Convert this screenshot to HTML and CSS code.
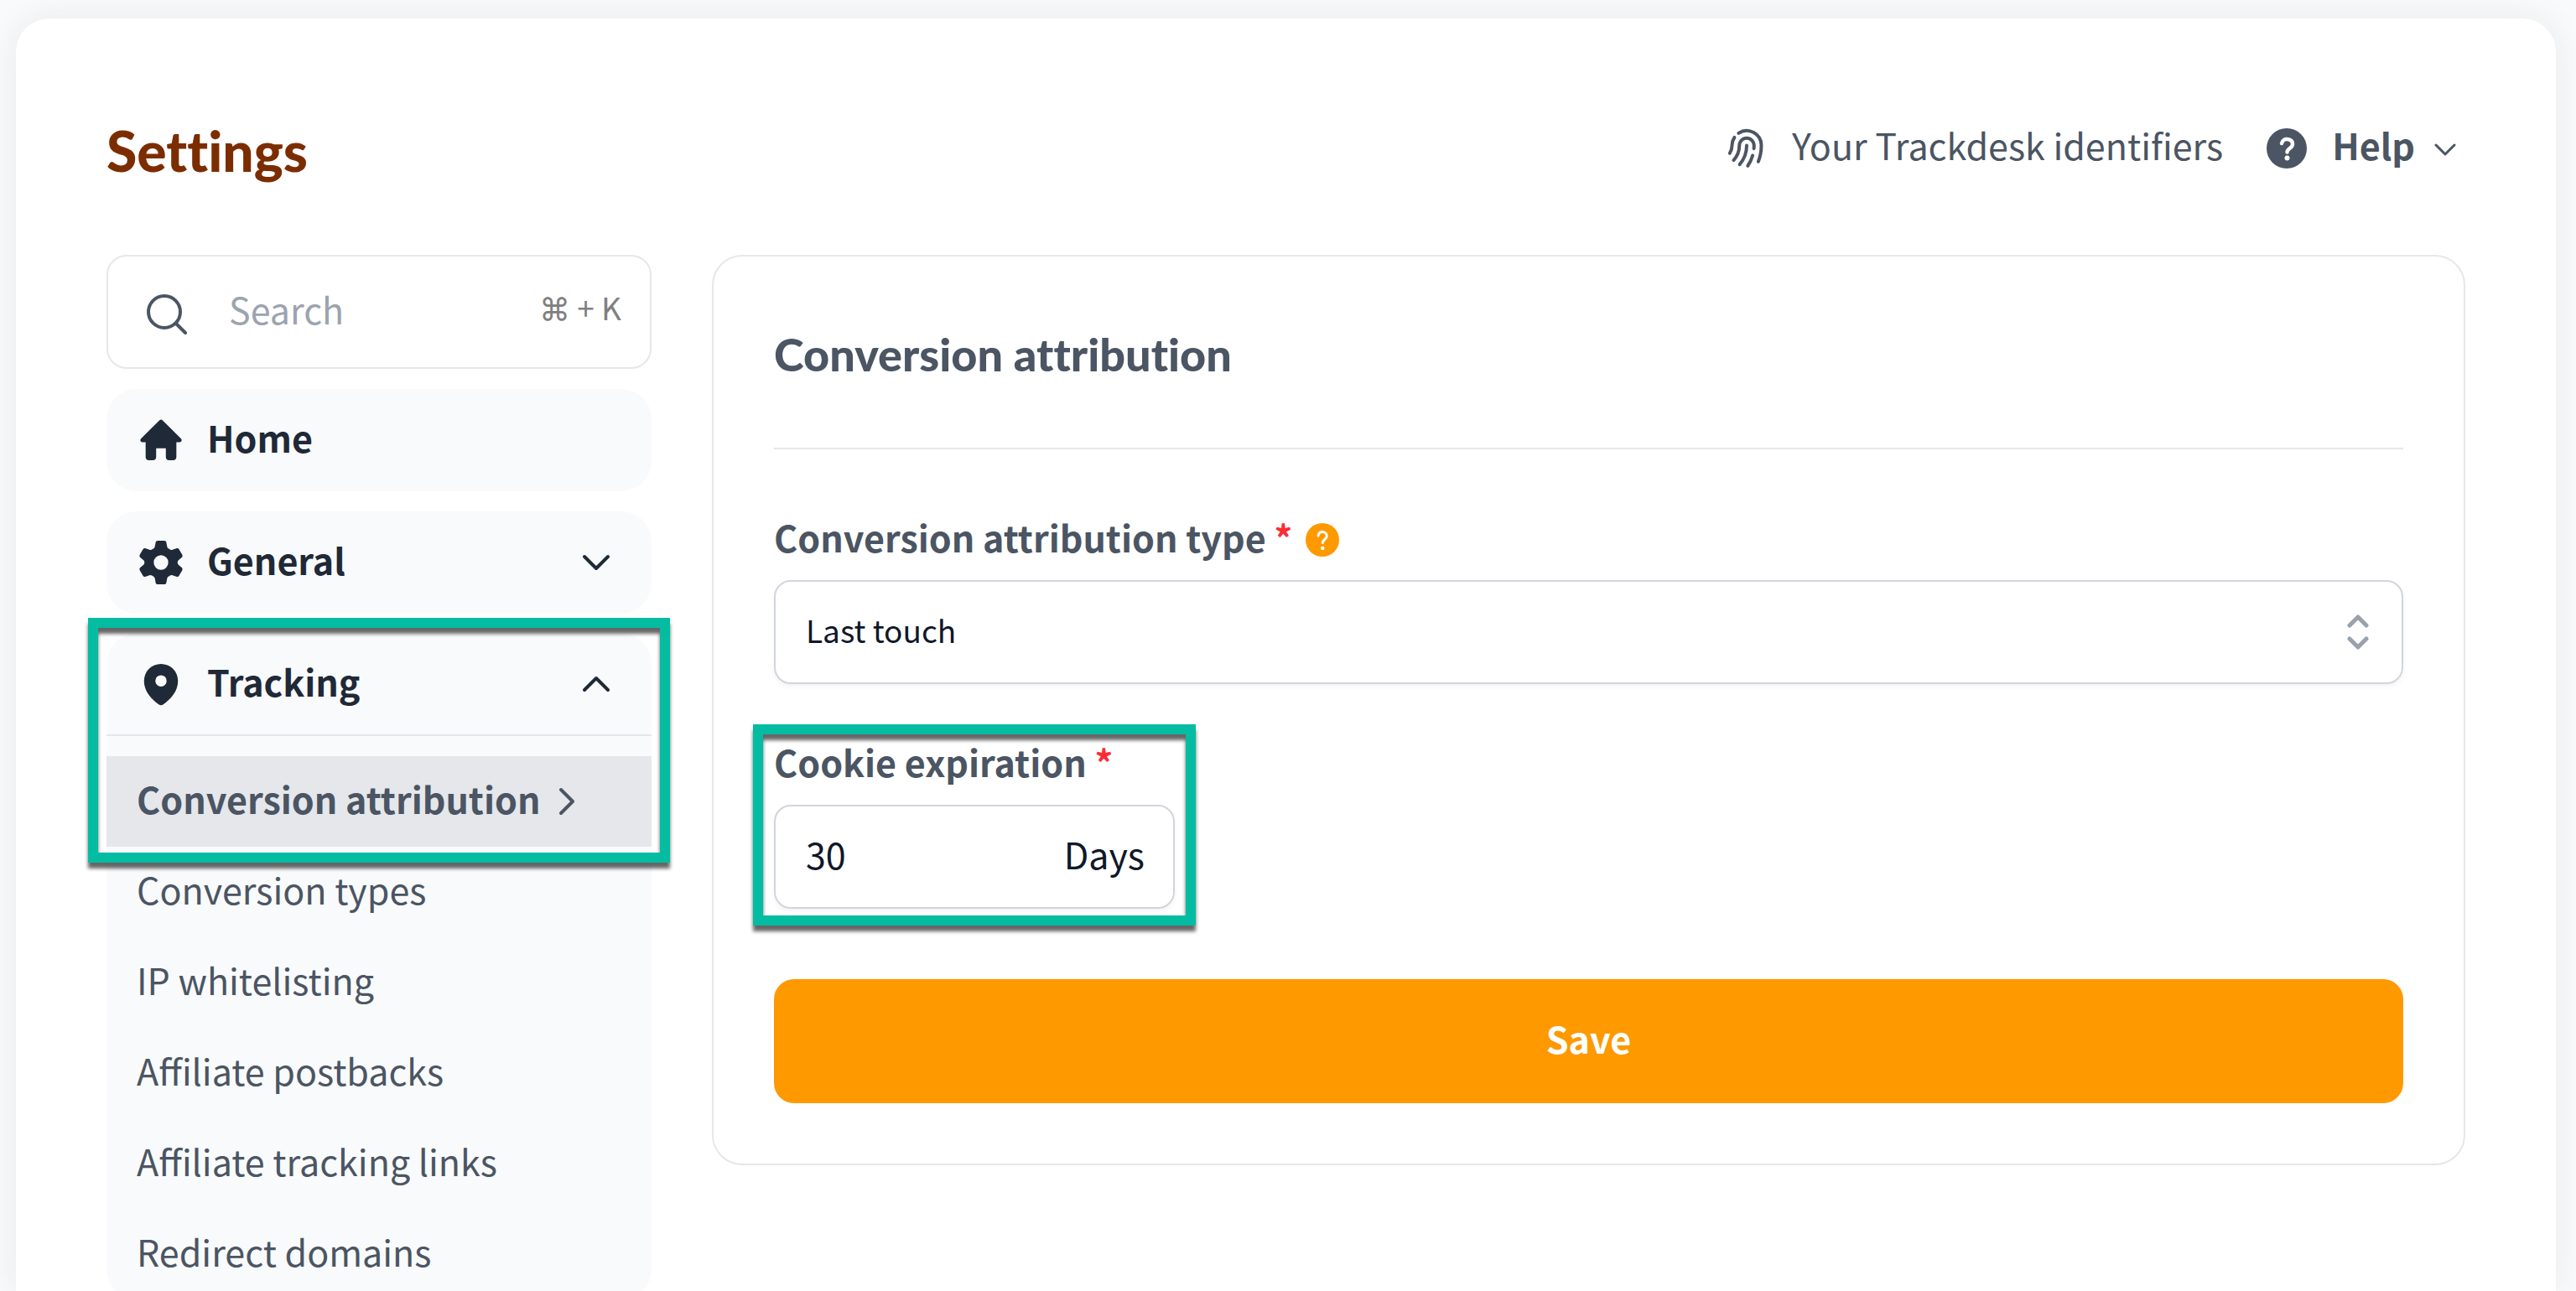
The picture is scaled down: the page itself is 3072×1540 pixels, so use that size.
FILE: index.html
```html
<!DOCTYPE html>
<html lang="en">
<head>
    <meta charset="UTF-8">
    <meta name="viewport" content="width=device-width, initial-scale=1.0">
    <title>Settings - Trackdesk</title>
    <link rel="stylesheet" href="styles.css">
</head>
<body>
    <main class="page">
        <header class="page-header">
            <h1>Settings</h1>
            <div class="header-actions">
                <a href="#" class="header-link">
                    <svg class="icon-fingerprint" viewBox="0 0 24 24" fill="none" stroke="currentColor" stroke-width="1.7" stroke-linecap="round" stroke-linejoin="round"><path d="M7.864 4.243A7.5 7.5 0 0 1 19.5 10.5c0 2.92-.556 5.709-1.568 8.268M5.742 6.364A7.465 7.465 0 0 0 4.5 10.5a7.464 7.464 0 0 1-1.15 3.993m1.989 3.559A11.209 11.209 0 0 0 8.25 10.5a3.75 3.75 0 1 1 7.5 0c0 .527-.021 1.049-.064 1.565M12 10.5a14.94 14.94 0 0 1-3.6 9.75m6.633-4.596a18.666 18.666 0 0 1-2.485 5.33"/></svg>
                    <span class="text">Your Trackdesk identifiers</span>
                </a>
                <button type="button" class="help-button">
                    <svg class="icon-help" viewBox="0 0 48 48"><circle cx="24" cy="24" r="24" fill="currentColor"/><path d="M18 18c1-4 4-5.500 7-5 4 .5 6 3 6 6 0 5-6.500 5-6.500 9.500" fill="none" stroke="#fff" stroke-width="4.500" stroke-linecap="round"/><circle cx="24.500" cy="35.500" r="3" fill="#fff"/></svg>
                    <span class="text">Help</span>
                    <svg class="icon-small-chevron" viewBox="0 0 28 16" fill="none" stroke="currentColor" stroke-width="3" stroke-linecap="round" stroke-linejoin="round"><path d="M3 2l11 11L25 2"/></svg>
                </button>
            </div>
        </header>

        <div class="layout">
            <nav class="sidebar">
                <label class="search">
                    <svg class="icon-search" viewBox="0 0 48 48" fill="none" stroke="currentColor" stroke-width="4" stroke-linecap="round"><circle cx="21" cy="21" r="19"/><path d="M35 35l11 11"/></svg>
                    <input type="search" class="text" placeholder="Search" aria-label="Search">
                    <kbd class="text"><span class="command-key">⌘</span> + K</kbd>
                </label>

                <a href="#" class="nav-group nav-title">
                    <svg class="nav-icon" viewBox="0 0 56 56" fill="currentColor"><path d="M26 3.500a3 3 0 0 1 4 0l22.500 22.500c2 2 1 4.500-1.500 4.500h-4V49c0 2.500-1.500 4-4 4h-5c-2.500 0-4-1.500-4-4V38H22v11c0 2.500-1.500 4-4 4h-5c-2.500 0-4-1.500-4-4V30.500H5c-2.500 0-3.500-2.500-1.500-4.500z"/></svg>
                    <span class="text">Home</span>
                </a>

                <div class="nav-group">
                    <button type="button" class="nav-title">
                        <svg class="nav-icon" viewBox="0 0 56 56" fill="currentColor"><path fill-rule="evenodd" d="M24 1h8c1.500 0 2.300.8 2.600 2.200l1.100 5.600c.2 1 .8 1.700 1.800 2.200l1.800 1c1 .6 1.900.7 2.900.3l4.700-1.700c1.500-.5 2.700-.2 3.400 1l3.800 6.600c.8 1.400.6 2.500-.5 3.500l-4 3.500c-.8.700-1.100 1.500-1.100 2.500v.6c0 1 .3 1.800 1.100 2.500l4 3.500c1.100 1 1.300 2.100.5 3.500l-3.800 6.600c-.7 1.200-1.900 1.500-3.400 1l-4.700-1.700c-1-.4-1.900-.3-2.900.3l-1.800 1c-1 .5-1.600 1.200-1.800 2.200l-1.100 5.600c-.3 1.400-1.100 2.200-2.600 2.200h-8c-1.500 0-2.300-.8-2.600-2.200l-1.100-5.600c-.2-1-.8-1.700-1.800-2.200l-1.800-1c-1-.6-1.900-.7-2.900-.3l-4.700 1.700c-1.500.5-2.700.2-3.400-1l-3.800-6.600c-.8-1.400-.6-2.500.5-3.500l4-3.500c.8-.7 1.100-1.500 1.100-2.500v-.6c0-1-.3-1.800-1.100-2.500l-4-3.500c-1.100-1-1.300-2.100-.5-3.500l3.800-6.600c.7-1.200 1.900-1.500 3.400-1l4.700 1.700c1 .4 1.900.3 2.900-.3l1.800-1c1-.5 1.600-1.200 1.800-2.200l1.100-5.600C21.700 1.800 22.500 1 24 1zm4 18a9 9 0 1 0 0 18a9 9 0 1 0 0-18z"/></svg>
                        <span class="text">General</span>
                        <svg class="nav-chevron" viewBox="0 0 36 20" fill="none" stroke="currentColor" stroke-width="4" stroke-linecap="round" stroke-linejoin="round"><path d="M4 3l14 14L32 3"/></svg>
                    </button>
                </div>

                <div class="nav-group">
                    <div class="highlight highlight-nav">
                        <button type="button" class="nav-title">
                            <svg class="nav-icon" viewBox="0 0 56 56" fill="currentColor"><path fill-rule="evenodd" d="M28 3a21 21 0 0 1 21 21c0 13-9 22.500-18.500 29.300a4.500 4.500 0 0 1-5 0C16 46.500 7 37 7 24A21 21 0 0 1 28 3zm0 14a7 7 0 1 0 0 14a7 7 0 1 0 0-14z"/></svg>
                            <span class="text">Tracking</span>
                            <svg class="nav-chevron" viewBox="0 0 36 20" fill="none" stroke="currentColor" stroke-width="4" stroke-linecap="round" stroke-linejoin="round"><path d="M4 17L18 3l14 14"/></svg>
                        </button>
                        <a href="#" class="nav-item active">
                            <span class="text">Conversion attribution</span>
                            <svg class="item-chevron" viewBox="0 0 20 36" fill="none" stroke="currentColor" stroke-width="4" stroke-linecap="round" stroke-linejoin="round"><path d="M3 4l14 14L3 32"/></svg>
                        </a>
                    </div>
                    <a href="#" class="nav-item"><span class="text">Conversion types</span></a>
                    <a href="#" class="nav-item"><span class="text">IP whitelisting</span></a>
                    <a href="#" class="nav-item"><span class="text">Affiliate postbacks</span></a>
                    <a href="#" class="nav-item"><span class="text">Affiliate tracking links</span></a>
                    <a href="#" class="nav-item"><span class="text">Redirect domains</span></a>
                </div>
            </nav>

            <form class="card">
                <h2>Conversion attribution</h2>

                <div class="field">
                    <div class="field-label">
                        <label class="text" for="attribution-type">Conversion attribution type <span class="required">*</span></label>
                        <svg class="icon-tip" viewBox="0 0 40 40"><circle cx="20" cy="20" r="20" fill="#ff9900"/><path d="M15 15c.8-3.500 3-4.800 5.500-4.500 3 .3 4.800 2.500 4.800 5 0 4-5 4-5 8" fill="none" stroke="#fff" stroke-width="3" stroke-linecap="round"/><circle cx="20.300" cy="30" r="2.200" fill="#fff"/></svg>
                    </div>
                    <div class="select-wrap">
                        <select id="attribution-type">
                            <option>Last touch</option>
                        </select>
                        <svg class="select-arrows" viewBox="0 0 28 44" fill="none" stroke="currentColor" stroke-width="5" stroke-linecap="round" stroke-linejoin="round"><path d="M4 14L14 4l10 10M4 30l10 10 10-10"/></svg>
                    </div>
                </div>

                <div class="field highlight highlight-field">
                    <div class="field-label">
                        <label class="text" for="cookie-expiration">Cookie expiration <span class="required">*</span></label>
                    </div>
                    <div class="input-group">
                        <input type="text" class="text" id="cookie-expiration" value="30" inputmode="numeric">
                        <span class="text">Days</span>
                    </div>
                </div>

                <button type="submit" class="save-button"><span class="text">Save</span></button>
            </form>
        </div>
    </main>
</body>
</html>
```

FILE: styles.css
```css
* {
    box-sizing: border-box;
}

body {
    margin: 0;
    padding: 22px 24px 0 19px;
    height: 100vh;
    overflow: hidden;
    background: #f9fafb;
    font-family: 'Noto Sans CJK SC', 'Open Sans', sans-serif;
    font-size: 43px;
    line-height: 60px;
    color: #4b5563;
}

a {
    color: inherit;
    text-decoration: none;
}

button,
input,
select {
    font: inherit;
    color: inherit;
    background: none;
    border: none;
    margin: 0;
    padding: 0;
}

button {
    cursor: pointer;
}

svg {
    flex-shrink: 0;
}

/* the font sits low in its line box */
.text {
    padding-bottom: 9px;
}

.page {
    height: 100%;
    overflow: hidden;
    padding: 108px 108px 0;
    background: #fff;
    border-radius: 40px 40px 0 0;
    box-shadow: 0 0 40px rgba(31, 41, 55, 0.08);
}

.page-header {
    display: flex;
    justify-content: space-between;
    align-items: flex-start;
    height: 174px;
}

h1 {
    margin: 0;
    padding-top: 10px;
    font-family: Lato, sans-serif;
    font-size: 66px;
    font-weight: 900;
    font-variant-ligatures: none;
    line-height: 80px;
    color: #7c2d00;
}

.header-actions {
    display: flex;
    align-items: flex-start;
    gap: 52px;
    padding: 12px 10px 0 0;
}

.header-link {
    display: flex;
    align-items: center;
    gap: 26px;
}

.help-button {
    display: flex;
    align-items: center;
    gap: 30px;
    font-weight: 700;
}

.icon-fingerprint {
    width: 56px;
    height: 56px;
}

.icon-help {
    width: 48px;
    height: 48px;
}

.icon-small-chevron {
    width: 28px;
    height: 16px;
    margin-left: -8px;
    margin-top: 4px;
}

.layout {
    display: grid;
    grid-template-columns: 650px 1fr;
    gap: 72px;
    align-items: start;
}

.sidebar {
    display: flex;
    flex-direction: column;
    gap: 24px;
}

.search {
    display: flex;
    align-items: center;
    height: 136px;
    padding: 0 34px 0 46px;
    border: 2px solid #e5e7eb;
    border-radius: 24px;
}

.icon-search {
    width: 48px;
    height: 48px;
    margin: 6px 50px 0 0;
}

.search input {
    flex: 1;
    min-width: 0;
    outline: none;
}

.search input::placeholder {
    color: #9ca3af;
}

.search kbd {
    font-family: inherit;
    font-size: 37px;
    color: #808080;
}

.command-key {
    font-family: Inter, sans-serif;
}

.nav-group {
    background: #f9fafb;
    border-radius: 36px;
}

.nav-title {
    display: flex;
    align-items: center;
    gap: 28px;
    width: 100%;
    height: 122px;
    padding: 0 48px 0 38px;
    font-weight: 700;
    text-align: left;
    color: #1f2937;
}

.nav-title .text {
    flex: 1;
}

.nav-icon {
    width: 54px;
    height: 54px;
}

.nav-chevron {
    width: 36px;
    height: 20px;
}

.nav-item {
    display: flex;
    align-items: center;
    gap: 22px;
    height: 108px;
    padding: 0 36px;
}

.nav-item.active {
    margin-top: 24px;
    background: #e5e7eb;
    font-weight: 700;
}

.item-chevron {
    width: 20px;
    height: 36px;
}

/* green callout frames */
.highlight {
    position: relative;
}

.highlight::after {
    content: '';
    position: absolute;
    border: 12px solid #04bca2;
    filter: drop-shadow(0 7px 2px rgba(0, 0, 0, 0.6));
    pointer-events: none;
}

.highlight-nav::after {
    inset: -19px -22px;
}

.highlight-nav .nav-title {
    border-bottom: 2px solid #e5e7eb;
}

.card {
    padding: 72px;
    border: 2px solid #e5e7eb;
    border-radius: 36px;
}

h2 {
    margin: 0 0 72px;
    padding: 10px 0 76px;
    border-bottom: 2px solid #e5e7eb;
    font-family: Lato, sans-serif;
    font-size: 54px;
    font-weight: 900;
    font-variant-ligatures: none;
    line-height: 70px;
}

.field {
    margin-bottom: 60px;
}

.field-label {
    display: flex;
    align-items: center;
    gap: 16px;
    height: 72px;
    margin-bottom: 12px;
    font-weight: 700;
}

.required {
    color: #fb2c36;
}

.icon-tip {
    width: 40px;
    height: 40px;
}

.select-wrap {
    position: relative;
    display: flex;
}

select {
    appearance: none;
    width: 100%;
    height: 124px;
    padding: 0 36px 6px;
    border: 2px solid #d1d5dc;
    border-radius: 20px;
    box-shadow: 0 3px 6px rgba(0, 0, 0, 0.05);
    font-size: 37px;
    color: #101828;
}

.select-arrows {
    position: absolute;
    top: 40px;
    right: 40px;
    width: 28px;
    height: 44px;
    color: #99a1af;
    pointer-events: none;
}

.highlight-field {
    width: 478px;
    margin-bottom: 84px;
}

.highlight-field::after {
    inset: -12px -25px -20px;
}

.input-group {
    display: flex;
    align-items: center;
    height: 124px;
    padding: 0 34px 0 36px;
    border: 2px solid #d1d5dc;
    border-radius: 20px;
    box-shadow: 0 3px 6px rgba(0, 0, 0, 0.05);
    color: #101828;
}

.input-group input {
    flex: 1;
    min-width: 0;
    outline: none;
}

.save-button {
    display: flex;
    align-items: center;
    justify-content: center;
    width: 100%;
    height: 148px;
    border-radius: 24px;
    background: #ff9900;
    font-weight: 700;
    color: #fff;
}
```
